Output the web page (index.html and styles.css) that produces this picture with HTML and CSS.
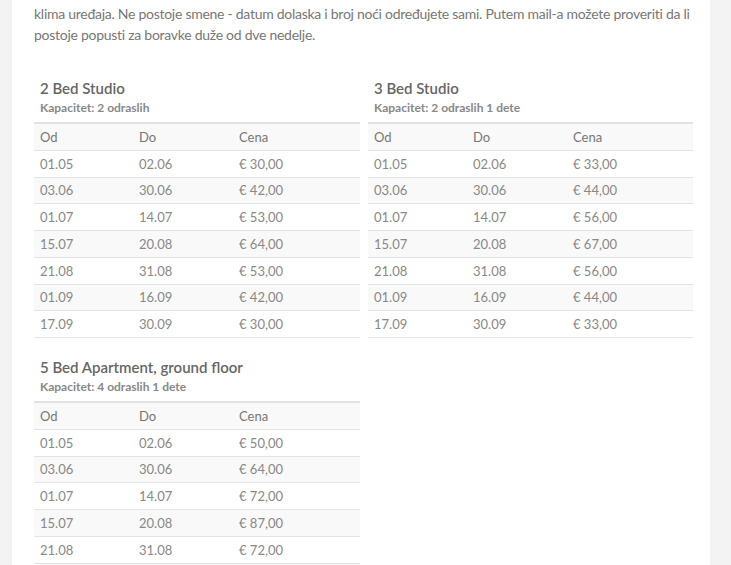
FILE: index.html
```html
<!DOCTYPE html>
<html lang="sr">
<head>
<meta charset="utf-8">
<title>Cenovnik</title>
<link rel="stylesheet" href="styles.css">
</head>
<body>
<div class="page">
  <main class="content">
    <p class="intro">klima uređaja. Ne postoje smene - datum dolaska i broj noći određujete sami. Putem mail-a možete proveriti da li postoje popusti za boravke duže od dve nedelje.</p>
    <div class="grid">
      <section class="block">
        <h3 class="title">2 Bed Studio</h3>
        <p class="cap">Kapacitet: 2 odraslih</p>
        <table class="prices">
          <thead><tr><th class="c1">Od</th><th class="c2">Do</th><th>Cena</th></tr></thead>
          <tbody>
            <tr><td>01.05</td><td>02.06</td><td>€ 30,00</td></tr>
            <tr><td>03.06</td><td>30.06</td><td>€ 42,00</td></tr>
            <tr><td>01.07</td><td>14.07</td><td>€ 53,00</td></tr>
            <tr><td>15.07</td><td>20.08</td><td>€ 64,00</td></tr>
            <tr><td>21.08</td><td>31.08</td><td>€ 53,00</td></tr>
            <tr><td>01.09</td><td>16.09</td><td>€ 42,00</td></tr>
            <tr><td>17.09</td><td>30.09</td><td>€ 30,00</td></tr>
          </tbody>
        </table>
      </section>
      <section class="block">
        <h3 class="title">3 Bed Studio</h3>
        <p class="cap">Kapacitet: 2 odraslih 1 dete</p>
        <table class="prices">
          <thead><tr><th class="c1">Od</th><th class="c2">Do</th><th>Cena</th></tr></thead>
          <tbody>
            <tr><td>01.05</td><td>02.06</td><td>€ 33,00</td></tr>
            <tr><td>03.06</td><td>30.06</td><td>€ 44,00</td></tr>
            <tr><td>01.07</td><td>14.07</td><td>€ 56,00</td></tr>
            <tr><td>15.07</td><td>20.08</td><td>€ 67,00</td></tr>
            <tr><td>21.08</td><td>31.08</td><td>€ 56,00</td></tr>
            <tr><td>01.09</td><td>16.09</td><td>€ 44,00</td></tr>
            <tr><td>17.09</td><td>30.09</td><td>€ 33,00</td></tr>
          </tbody>
        </table>
      </section>
      <section class="block">
        <h3 class="title">5 Bed Apartment, ground floor</h3>
        <p class="cap">Kapacitet: 4 odraslih 1 dete</p>
        <table class="prices">
          <thead><tr><th class="c1">Od</th><th class="c2">Do</th><th>Cena</th></tr></thead>
          <tbody>
            <tr><td>01.05</td><td>02.06</td><td>€ 50,00</td></tr>
            <tr><td>03.06</td><td>30.06</td><td>€ 64,00</td></tr>
            <tr><td>01.07</td><td>14.07</td><td>€ 72,00</td></tr>
            <tr><td>15.07</td><td>20.08</td><td>€ 87,00</td></tr>
            <tr><td>21.08</td><td>31.08</td><td>€ 72,00</td></tr>
            <tr><td>01.09</td><td>16.09</td><td>€ 64,00</td></tr>
            <tr><td>17.09</td><td>30.09</td><td>€ 50,00</td></tr>
          </tbody>
        </table>
      </section>
    </div>
  </main>
</div>
</body>
</html>
```

FILE: styles.css
```css
html, body {
  margin: 0;
  padding: 0;
  background: #f3f3f3;
}
body {
  font-family: Lato, "Open Sans", sans-serif;
  color: #777;
  overflow: hidden;
}
.page {
  padding-left: 12px;
  width: 698px;
}
.content {
  background: #fff;
  padding: 3px 17px 40px 22px;
  min-height: 600px;
}
.intro {
  margin: 0;
  font-size: 14px;
  line-height: 21px;
  letter-spacing: -0.27px;
  color: #777;
}
.grid {
  margin-top: 33px;
  display: grid;
  grid-template-columns: 326px 325px;
  column-gap: 8px;
  row-gap: 19px;
}
.title {
  margin: 0;
  padding-left: 6px;
  font-size: 15px;
  line-height: 20px;
  font-weight: 600;
  color: #666;
}
.cap {
  margin: 2px 0 6px;
  padding-left: 6px;
  font-size: 12px;
  line-height: 16px;
  font-weight: 700;
  color: #888;
}
.prices {
  width: 100%;
  border-collapse: collapse;
  border-top: 2px solid #e2e2e2;
  font-size: 13px;
}
.prices th,
.prices td {
  text-align: left;
  padding: 0 6px;
  height: 25.75px;
  border-bottom: 1px solid #e4e4e4;
}
.prices th {
  font-weight: 400;
  color: #777;
  background: #f9f9f9;
}
.prices td {
  color: #888;
}
.prices tbody tr:nth-child(even) td {
  background: #f9f9f9;
}
.c1 { width: 87px; }
.c2 { width: 88px; }
```
